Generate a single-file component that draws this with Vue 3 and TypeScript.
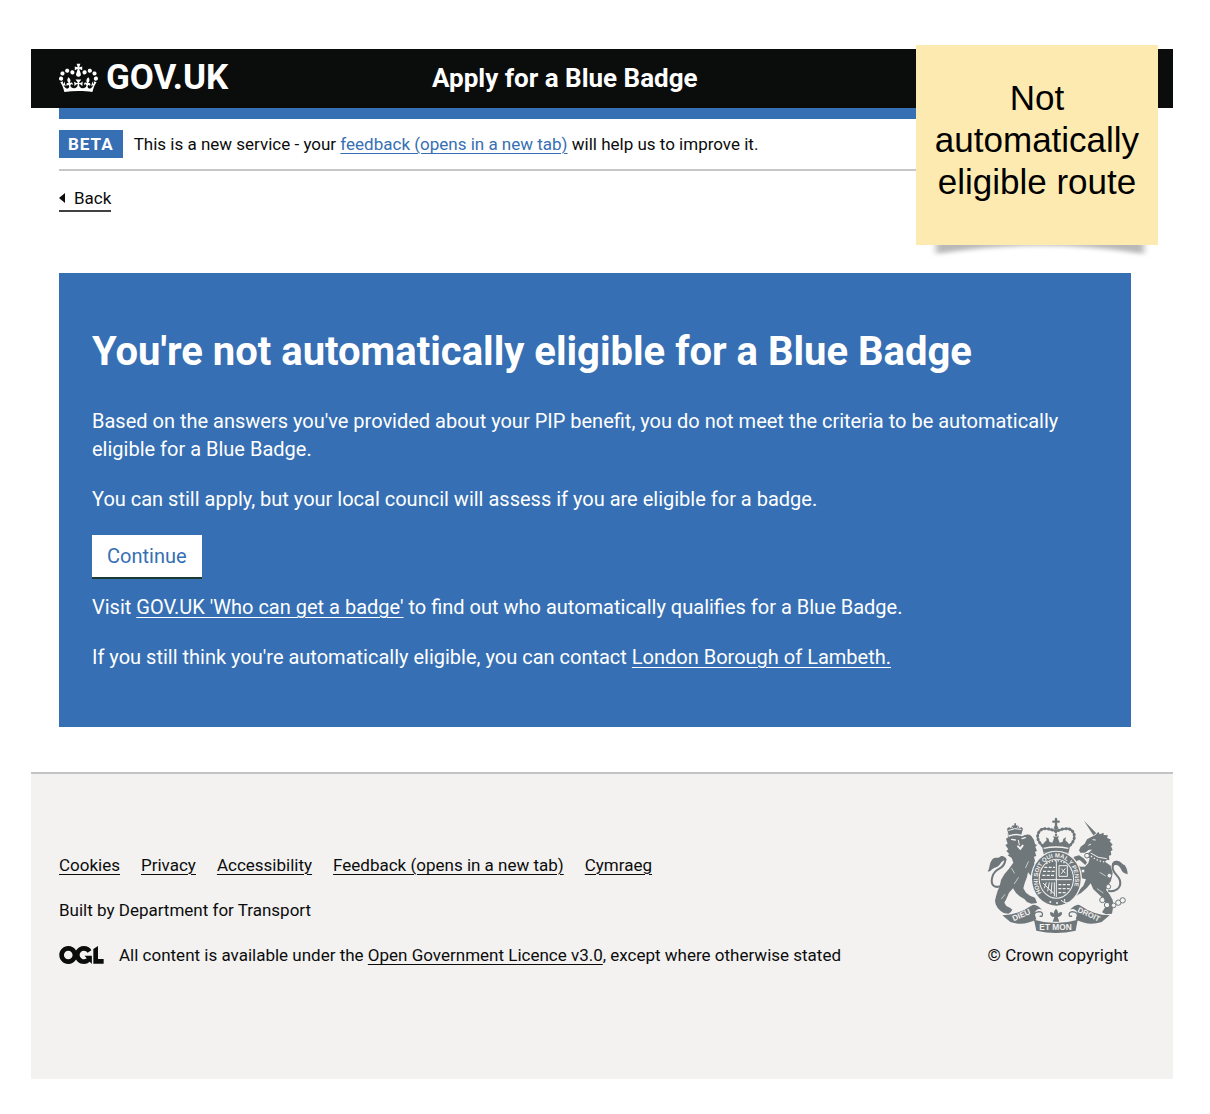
<script setup lang="ts">
interface FooterLink {
  label: string
  href: string
}

const footerLinks: FooterLink[] = [
  { label: 'Cookies', href: '#cookies' },
  { label: 'Privacy', href: '#privacy' },
  { label: 'Accessibility', href: '#accessibility' },
  { label: 'Feedback (opens in a new tab)', href: '#feedback' },
  { label: 'Cymraeg', href: '#cymraeg' },
]

const chainRings: number[][] = [
  [348, 152, 7],
  [336, 198, 6],
  [415, 212, 7],
  [412, 245, 7],
  [394, 285, 8],
  [408, 300, 8],
  [428, 301, 7],
  [442, 293, 8],
  [455, 286, 8],
]
</script>

<template>
  <div class="page">
    <header class="header">
      <a class="brand" href="#home">
        <svg class="crown" viewBox="0 0 132 97" aria-hidden="true">
          <path
            fill="currentColor"
            fill-rule="evenodd"
            d="M25 30.2c3.5 1.5 7.7-.2 9.1-3.7 1.5-3.6-.2-7.8-3.9-9.2-3.6-1.4-7.6.3-9.1 3.9-1.4 3.5.3 7.5 3.9 9zM9 39.5c3.6 1.5 7.8-.2 9.2-3.7 1.5-3.6-.2-7.8-3.9-9.1-3.6-1.5-7.6.2-9.1 3.8-1.4 3.5.3 7.5 3.8 9zM4.4 57.2c3.5 1.5 7.7-.2 9.1-3.8 1.5-3.6-.2-7.7-3.9-9.1-3.5-1.5-7.6.3-9.1 3.8-1.4 3.5.3 7.6 3.9 9.1zm38.3-21.4c3.5 1.5 7.7-.2 9.1-3.8 1.5-3.6-.2-7.7-3.9-9.1-3.6-1.5-7.6.3-9.1 3.8-1.3 3.6.4 7.7 3.9 9.1zm64.4-5.6c-3.6 1.5-7.8-.2-9.1-3.7-1.5-3.6.2-7.8 3.8-9.2 3.6-1.4 7.7.3 9.2 3.9 1.3 3.5-.4 7.5-3.9 9zm15.9 9.3c-3.6 1.5-7.7-.2-9.1-3.7-1.5-3.6.2-7.8 3.7-9.1 3.6-1.5 7.7.2 9.2 3.8 1.5 3.5-.3 7.5-3.8 9zm4.7 17.7c-3.6 1.5-7.8-.2-9.2-3.8-1.5-3.6.2-7.7 3.9-9.1 3.6-1.5 7.7.3 9.2 3.8 1.3 3.5-.4 7.6-3.9 9.1zM89.3 35.8c-3.6 1.5-7.8-.2-9.2-3.8-1.4-3.6.2-7.7 3.9-9.1 3.6-1.5 7.7.3 9.2 3.8 1.4 3.6-.3 7.7-3.9 9.1zM69.7 17.7l8.9 4.7V9.3l-8.9 2.8c-.2-.3-.5-.6-.9-.9L72.4 0H59.6l3.5 11.2c-.3.3-.6.5-.9.9l-8.8-2.8v13.1l8.8-4.7c.3.3.6.7.9.9l-5 15.4v.1c-.2.8-.4 1.6-.4 2.4 0 4.1 3.1 7.5 7 8.1h.2c.3 0 .7.1 1 .1.4 0 .7 0 1-.1h.2c4-.6 7.1-4.1 7.1-8.1 0-.8-.1-1.7-.4-2.4V34l-5.1-15.4c.4-.2.7-.6 1-.9zM66 92.8c16.9 0 32.8 1.1 47.1 3.2 4-16.9 8.9-26.7 14-33.5l-9.6-3.4c1 4.9 1.1 7.2 0 10.2-1.5-1.4-3-4.3-4.2-8.7L108.6 76c2.8-2 5-3.2 7.5-3.3-4.4 9.4-10 11.9-13.6 11.2-4.3-.8-6.3-4.6-5.6-7.9 1-4.7 5.7-5.9 8-.5 4.3-8.7-3-11.4-7.6-8.8 7.1-7.2 7.9-13.5 2.1-21.1-8 6.1-8.1 12.3-4.5 20.8-4.7-5.4-12.1-2.5-9.5 6.2 3.4-5.2 7.9-2 7.2 3.1-.6 4.3-6.4 7.8-13.5 7.2-10.3-.9-10.9-8-11.2-13.8 2.5-.5 7.1 1.8 11 7.3L80.2 60c-4.1 4.4-8 5.3-12.3 5.4 1.4-4.4 8-11.6 8-11.6H55.5s6.4 7.2 7.9 11.6c-4.2-.1-8-1-12.3-5.4l1.4 16.4c3.9-5.5 8.5-7.7 10.9-7.3-.3 5.8-.9 12.8-11.1 13.8-7.2.6-12.9-2.9-13.5-7.2-.7-5 3.8-8.3 7.1-3.1 2.7-8.7-4.6-11.6-9.4-6.2 3.7-8.5 3.6-14.7-4.6-20.8-5.8 7.6-5 13.9 2.2 21.1-4.7-2.6-11.9.1-7.7 8.8 2.3-5.5 7.1-4.2 8.1.5.7 3.3-1.3 7.1-5.7 7.9-3.5.7-9-1.8-13.5-11.2 2.5.1 4.7 1.3 7.5 3.3l-4.7-15.4c-1.2 4.4-2.7 7.2-4.3 8.7-1.1-3-.9-5.3 0-10.2l-9.5 3.4c5 6.9 9.9 16.7 14 33.5 14.8-2.1 30.8-3.2 47.7-3.2z"
          />
        </svg>
        <span>GOV.UK</span>
      </a>
      <a class="service" href="#service">Apply for a Blue Badge</a>
    </header>

    <div class="container">
      <div class="accent"></div>
      <div class="phase">
        <strong class="tag">BETA</strong>
        <span>This is a new service - your <a href="#feedback">feedback (opens in a new tab)</a> will help us to improve it.</span>
      </div>
      <a class="back" href="#back">
        <svg class="arrow" viewBox="0 0 6 10" aria-hidden="true"><path d="M6 0v10L0 5z" fill="currentColor" /></svg>
        <span>Back</span>
      </a>

      <main class="panel">
        <h1>You're not automatically eligible for a Blue Badge</h1>
        <p>Based on the answers you've provided about your PIP benefit, you do not meet the criteria to be automatically eligible for a Blue Badge.</p>
        <p>You can still apply, but your local council will assess if you are eligible for a badge.</p>
        <button class="continue" type="button">Continue</button>
        <p>Visit <a href="#who">GOV.UK 'Who can get a badge'</a> to find out who automatically qualifies for a Blue Badge.</p>
        <p>If you still think you're automatically eligible, you can contact <a href="#council">London Borough of Lambeth.</a></p>
      </main>
    </div>

    <footer class="footer">
      <div class="footer-main">
        <nav class="links" aria-label="Footer">
          <a v-for="link in footerLinks" :key="link.label" :href="link.href">{{ link.label }}</a>
        </nav>
        <p>Built by Department for Transport</p>
        <div class="licence">
          <svg class="ogl" viewBox="0 0 484 196" aria-hidden="true">
            <path
              fill="currentColor"
              d="M421.500 142.800V.1l-50.700 32.300v161.100h112.400v-50.700zm-122.300-9.600A47.120 47.120 0 0 1 221 97.800c0-26 21.100-47.100 47.100-47.100 16.700 0 31.400 8.700 39.700 21.800l42.700-27.200A97.630 97.630 0 0 0 268.100 0c-36.500 0-68.300 20.100-85.100 49.700A98 98 0 0 0 97.800 0C43.900 0 0 43.900 0 97.800s43.900 97.800 97.800 97.800c36.500 0 68.300-20.100 85.100-49.700a97.760 97.760 0 0 0 149.600 25.400l19.400 22.200h3v-87.800h-80l24.300 27.500zM97.800 145c-26 0-47.100-21.100-47.100-47.100s21.100-47.100 47.100-47.100 47.100 21.100 47.100 47.100S123.800 145 97.800 145"
            />
          </svg>
          <span>All content is available under the <a href="#licence">Open Government Licence v3.0</a>, except where otherwise stated</span>
        </div>
      </div>

      <a class="copyright" href="#copyright">
        <svg class="crest" viewBox="48 36 426 351" aria-hidden="true">
          <defs>
            <path id="garter" d="M212 264A56 66 0 1 1 300 264" />
          </defs>

          <!-- royal crown -->
          <g fill="none" stroke="#6f777b" stroke-linecap="round">
            <path stroke-width="7" d="M255 42v22M247 50h16" />
            <circle cx="255" cy="69" r="6" fill="#6f777b" />
            <path stroke-width="5" d="M214 122C188 98 202 70 224 71c14 0 24 6 31 8 7-2 17-8 31-8 22-1 36 27 10 51" />
            <path stroke-width="9" stroke-dasharray="1 10" d="M214 122C188 98 202 70 224 71c14 0 24 6 31 8 7-2 17-8 31-8 22-1 36 27 10 51" />
            <path stroke-width="7" stroke-dasharray="1 8" d="M255 80v26" />
          </g>
          <path fill="#6f777b" d="M213 123l6-10 8-7-2-9 8 4 2 9 9 3 5-13-3-7 9 3 9-3-3 7 5 13 9-3 2-9 8-4-2 9 8 7 6 10-4 20q-40-9-76 0z" />
          <path fill="none" stroke="#f3f2f1" stroke-width="4" d="M218 130q37-8 74 0" />
          <path fill="none" stroke="#6f777b" stroke-width="5" d="M218 146q37-8 74 0" />

          <!-- lion -->
          <g fill="#6f777b">
            <path d="M113 91l-5-20 6-5 6 4 3-8 7-1v-6h5v6l7 1 3 8 6-4 5 5-5 18q-18-6-38 2z" />
            <path d="M111 97q20-11 42-3 17-10 28-1l8 12 3 12 6 3-5 6 5 11-6 4 4 12-7 2 3 13-3 6 9 12 6 10-3 10 7 9-3 14-9-2-4-9-12-6-9-10-3 14-7 19-4 15 8 13 12 9 15 6 6 16-17 2-13-5-8-9-14-8-11-10-9-14-12 13-7 17-7 13 6 10 12 6 6 5-4 7-8 5-14-2-9-6-9-9-6-11-2-11 3-13 5-17 6-13 4-19 10-17 14-17 13-18-5-14-12-8 5-4-9-9 6-5-9-13 7-4-5-15 8-5-3-13z" />
          </g>
          <path fill="none" stroke="#6f777b" stroke-width="6" stroke-linecap="round" d="M86 244C68 250 58 238 64 216c3-12 11-20 21-25s17-15 18-27" />
          <path fill="#6f777b" d="M50 199c8-10 3-24 15-37 8-7 16 0 25-9 10 0 17 5 17 13-9-2-14 2-19 10-8 12-17 10-24 16-4 4-8 10-14 7z" />
          <g stroke="#f3f2f1" fill="none" stroke-linecap="round">
            <path stroke-width="3" d="M113 76q19-9 37-3M124 68v1M140 66v1" />
            <path stroke-width="4" d="M122 103l11 2M153 101l10-3" />
            <path stroke-width="3" d="M142 106l3 13" />
            <path stroke-width="6" d="M141 124l7 7 7-9" />
            <path stroke-width="2" d="M122 190l8 14M142 218l-12 18M172 170l-8 18M92 281l9-12" />
          </g>

          <!-- unicorn -->
          <g fill="#6f777b">
            <path d="M339 47l37 38-9 6z" />
            <path d="M374 89l8-9 4 8 12-5 0 7 13 1-3 7 12 6-4 5 9 10-5 5 5 11-6 4 2 11-7 2 1 14-7-2-6 6 17 12 6 22-5 23-10 16-5 11 10 13 10 18 2 17-4 24-18 2-12-6 12-20-4-17-18-17-16-15-8-18-11 13-17 15-16 10-9 2-5 14-8-12 7-12 20-5 17-18 8-19-15-4-7-17-16-3-5-9-18 4-5-14 8-5 5 8 19-8 18 10 13 0 10-11 4-14-9-4 4-11 12-11-9 0-12 9-14 0-4-7 5-11 12-9 7-13z" />
            <path d="M309 155l15-4 14 9 10 12-5 8-17-15-8 2-7 9-6-10z" />
          </g>
          <path fill="none" stroke="#6f777b" stroke-width="6" stroke-linecap="round" d="M414 258c24 3 39-13 32-34-5-14-22-20-21-38 0-8 4-15 11-16" />
          <path fill="#6f777b" d="M424 190c-5-15 4-26 17-22 10 2 12 11 20 12 5 8 9 15 9 28-9-4-15-4-19-14-5-11-12-16-21-13z" />
          <g stroke="#f3f2f1" fill="none">
            <path stroke-width="3" d="M359 144q21 17 48 17" />
            <path stroke-width="4" stroke-dasharray="4 6" d="M360 153q20 17 46 18" />
            <path stroke-width="3" d="M365 104l9 1M352 121l8-4" />
            <path stroke-width="2" d="M386 202l18 11M378 251l19 13" />
          </g>
          <g fill="#f3f2f1" stroke="#6f777b" stroke-width="3">
            <circle v-for="(ring, i) in chainRings" :key="i" :cx="ring[0]" :cy="ring[1]" :r="ring[2]" />
          </g>

          <!-- garter and shield -->
          <ellipse cx="256" cy="221" rx="77" ry="84" fill="#f3f2f1" />
          <ellipse cx="256" cy="221" rx="73" ry="81" fill="#6f777b" />
          <ellipse cx="256" cy="221" rx="53" ry="60" fill="#f3f2f1" />
          <ellipse cx="256" cy="221" rx="50" ry="57" fill="#6f777b" />
          <g stroke="#f3f2f1" fill="none">
            <path stroke-width="3" d="M256 166v110M210 224h92" />
            <path stroke-width="4" stroke-dasharray="9 4" d="M220 187h32M216 199h36M214 211h38M262 239h38M262 251h34M262 263h26" />
            <path stroke-width="3" d="M264 182h25v32h-25zM271 191l12 14M283 190l-12 16M216 234q16 18 34 32M226 232l-6 18M235 232l-5 27M243 232l-3 35M250 232v42" />
            <path stroke-width="4" stroke-dasharray="4 5" d="M226 177q28-20 60 0" />
          </g>
          <g fill="#f3f2f1" font-family="Liberation Sans, sans-serif" font-weight="700">
            <text font-size="18"><textPath href="#garter">HONI SOIT QUI MAL Y PENSE</textPath></text>
            <circle cx="238" cy="291" r="3" />
            <circle cx="258" cy="294" r="3" />
          </g>
          <path fill="none" stroke="#f3f2f1" stroke-width="3" d="M270 286q17 13 32 5M281 282q-2 8 4 14" />

          <!-- motto ribbon -->
          <g fill="#6f777b">
            <path d="M94 331q48-1 87-29 9-6 20 2l13 10q-9-4-16 0-9 6-6 15l4 14q-38 22-78 8z" />
            <path d="M416 331q-48-1-87-29-9-6-20 2l-13 10q9-4 16 0 9 6 6 15l-4 14q38 22 78 8z" />
            <path d="M189 344q66 20 131 0l-6 33q-59 14-118 0z" />
          </g>
          <path fill="none" stroke="#6f777b" stroke-width="4" d="M191 348q-8-26 12-28 14 0 11 12-4 4-8 0M318 348q8-26-12-28-14 0-11 12 4 4 8 0" />
          <path fill="#6f777b" d="M255 311q10 10 4 20 3-12 14-9 2 9-8 13l-5 1 5 14h-20l5-14q-14 0-13-14 10-3 14 9-6-10 4-20z" />
          <g fill="#f3f2f1" font-family="Liberation Sans, sans-serif" font-weight="700">
            <text x="128" y="349" transform="rotate(-24 128 349)" font-size="24">DIEU</text>
            <text x="318" y="320" transform="rotate(25 318 320)" font-size="23">DROIT</text>
            <text x="205" y="376" font-size="25">ET MON</text>
          </g>
        </svg>
        <span>© Crown copyright</span>
      </a>
    </footer>

    <aside class="note">
      <svg class="note-shadow" viewBox="0 0 242 24" preserveAspectRatio="none" aria-hidden="true">
        <defs>
          <filter id="soft" x="-10%" y="-50%" width="120%" height="200%"><feGaussianBlur stdDeviation="3 2" /></filter>
        </defs>
        <path d="M20 0H228V15Q125-2 20 15z" fill="#000" fill-opacity=".28" filter="url(#soft)" />
      </svg>
      <p>Not automatically eligible route</p>
    </aside>
  </div>
</template>

<style>
body {
  margin: 0;
  background: #fff;
}
</style>

<style scoped>
.page {
  position: relative;
  margin: 49px 37px 35px 31px;
  color: #0b0c0c;
  font-family: Roboto, "Noto Sans", sans-serif;
  font-size: 17px;
  line-height: 24px;
}

p,
h1 {
  margin: 0;
}

a {
  color: inherit;
  text-decoration-thickness: 1px;
  text-underline-offset: 3px;
}

.header {
  display: grid;
  grid-template-columns: 373px 1fr;
  align-items: center;
  box-sizing: border-box;
  height: 59px;
  padding: 0 42px 2px 28px;
  background: #0b0c0c;
  color: #fff;
}

.header a {
  text-decoration: none;
  font-weight: 700;
}

.brand {
  display: flex;
  align-items: center;
  gap: 8px;
  font-size: 35px;
}

.crown {
  width: 39px;
  height: 30px;
}

.service {
  font-size: 26px;
}

.container {
  padding: 0 42px 0 28px;
}

.accent {
  height: 11px;
  background: #366fb3;
}

.phase {
  display: flex;
  align-items: center;
  gap: 11px;
  padding: 11px 0;
  border-bottom: 2px solid #c6c7c7;
}

.phase a {
  color: #366fb3;
}

.tag {
  padding: 2px 9px;
  background: #366fb3;
  color: #fff;
  letter-spacing: 1px;
}

.back {
  display: inline-flex;
  align-items: center;
  gap: 9px;
  margin-top: 15px;
  border-bottom: 2px solid #404141;
  text-decoration: none;
}

.arrow {
  width: 6px;
  height: 10px;
}

.panel {
  display: flex;
  flex-direction: column;
  align-items: flex-start;
  gap: 22px;
  margin-top: 61px;
  padding: 56px 33px;
  background: #366fb3;
  color: #fff;
  font-size: 20px;
  line-height: 28px;
}

h1 {
  margin-bottom: 10px;
  font-size: 40px;
  line-height: 46px;
}

.continue {
  height: 44px;
  margin-bottom: -8px;
  padding: 0 15px;
  border: 0;
  border-bottom: 2px solid #1c3a34;
  background: #fff;
  color: #366fb3;
  font: inherit;
}

.footer {
  display: flex;
  justify-content: space-between;
  align-items: flex-end;
  margin-top: 45px;
  padding: 43px 42px 112px 28px;
  border-top: 2px solid #c2c3c3;
  background: #f3f2f1;
}

.footer-main {
  display: flex;
  flex-direction: column;
  gap: 21px;
}

.links {
  display: flex;
  gap: 21px;
}

.licence {
  display: flex;
  align-items: center;
  gap: 15px;
}

.ogl {
  width: 45px;
  height: 18px;
}

.copyright {
  display: flex;
  flex-direction: column;
  align-items: center;
  gap: 9px;
  min-width: 146px;
  text-decoration: none;
}

.crest {
  width: 142px;
  height: 117px;
}

.note {
  position: absolute;
  top: -4px;
  right: 15px;
  display: flex;
  align-items: center;
  box-sizing: border-box;
  width: 242px;
  height: 200px;
  padding: 0 16px 10px;
  background: #fdeab0;
  color: #000;
  font-family: "Liberation Sans", Arial, sans-serif;
  font-size: 35px;
  line-height: 42px;
  text-align: center;
}

.note-shadow {
  position: absolute;
  top: 194px;
  left: 0;
  z-index: -1;
  width: 242px;
  height: 24px;
  overflow: visible;
}
</style>
